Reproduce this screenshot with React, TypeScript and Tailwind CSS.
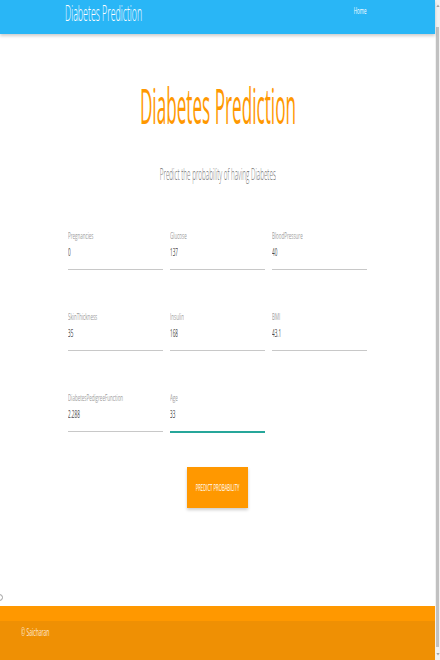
import React from "react";

const font = { fontFamily: '"Open Sans", "Liberation Sans", sans-serif' };

function Field({ label, value, active }: { label: string; value: string; active?: boolean }) {
  return (
    <div className="flex flex-col">
      <div className="h-[15px] text-[9px] leading-[15px] text-[#9e9e9e] whitespace-nowrap">
        <span className="inline-block origin-left scale-x-[0.5]">{label}</span>
      </div>
      <div className="h-[17px] text-[11px] leading-[17px] text-[#4a4a4a] whitespace-nowrap">
        <span className="inline-block origin-left scale-x-[0.42]">{value}</span>
      </div>
      <div className="h-[9px]" />
      {active ? (
        <div className="h-[2px] bg-[#26a69a]" />
      ) : (
        <div className="h-[1px] bg-[#c8c8c8]" />
      )}
    </div>
  );
}

export default function App() {
  return (
    <div className="relative flex h-[660px] w-[440px] overflow-hidden bg-white" style={font}>
      <div className="flex w-[435px] flex-col">
        {/* navbar */}
        <nav className="relative z-10 flex h-[34px] shrink-0 items-start bg-[#29b6f6] shadow-[0_2px_3px_rgba(0,0,0,0.2)]">
          <div className="ml-[65px] text-[22px] leading-[24px] font-light text-white whitespace-nowrap">
            <span className="inline-block origin-left scale-x-[0.4]">Diabetes Prediction</span>
          </div>
          <div className="ml-auto mr-[69px] mt-[5px] text-[9px] leading-[12px] text-white whitespace-nowrap">
            <span className="inline-block origin-right scale-x-[0.5]">Home</span>
          </div>
        </nav>

        {/* main */}
        <main className="flex flex-1 flex-col items-center">
          <h1 className="mt-[47px] h-[48px] text-[49px] leading-[48px] font-normal text-[#ff9800] whitespace-nowrap">
            <span className="inline-block origin-center scale-x-[0.35]">Diabetes Prediction</span>
          </h1>
          <p className="mt-[36px] h-[17px] text-[17px] leading-[17px] font-light text-[#757575] whitespace-nowrap">
            <span className="inline-block origin-center scale-x-[0.37]">Predict the probability of having Diabetes</span>
          </p>

          <div className="mt-[46px] grid w-[299px] grid-cols-3 gap-x-[7px] gap-y-[39px]">
            <Field label="Pregnancies" value="0" />
            <Field label="Glucose" value="137" />
            <Field label="BloodPressure" value="40" />
            <Field label="SkinThickness" value="35" />
            <Field label="Insulin" value="168" />
            <Field label="BMI" value="43.1" />
            <Field label="DiabetesPedigreeFunction" value="2.288" />
            <Field label="Age" value="33" active />
          </div>

          <button className="mt-[34px] flex h-[41px] w-[61px] items-center justify-center bg-[#ff9800] text-[9px] text-white shadow-[0_2px_3px_rgba(0,0,0,0.2)] whitespace-nowrap">
            <span className="inline-block origin-center scale-x-[0.47]">PREDICT PROBABILITY</span>
          </button>
        </main>

        {/* footer */}
        <footer className="flex h-[54px] shrink-0 flex-col bg-[#ff9800]">
          <div className="h-[15px]" />
          <div className="flex flex-1 items-start bg-[#ef9004] pl-[21px] pt-[4px]">
            <span className="h-[14px] text-[10px] leading-[14px] text-white/80 whitespace-nowrap">
              <span className="inline-block origin-left scale-x-[0.5]">© Saicharan</span>
            </span>
          </div>
        </footer>
      </div>

      {/* scrollbar */}
      <div className="flex w-[5px] flex-col bg-[#f1f1f1]">
        <div className="flex h-[27px] items-start justify-center pt-[4px]">
          <svg width="4" height="4" viewBox="0 0 4 4">
            <path d="M2 0.5 L3.6 3 L0.4 3 Z" fill="#a3a3a3" />
          </svg>
        </div>
        <div className="mx-[1px] flex-1 bg-[#c1c1c1]" />
        <div className="flex h-[13px] items-center justify-center">
          <svg width="4" height="4" viewBox="0 0 4 4">
            <path d="M2 3.5 L3.6 1 L0.4 1 Z" fill="#a3a3a3" />
          </svg>
        </div>
      </div>

      {/* partially hidden ring at left edge */}
      <div className="absolute left-[-4px] top-[594px] h-[7px] w-[7px] rounded-full border border-[#9e9e9e]" />
    </div>
  );
}
